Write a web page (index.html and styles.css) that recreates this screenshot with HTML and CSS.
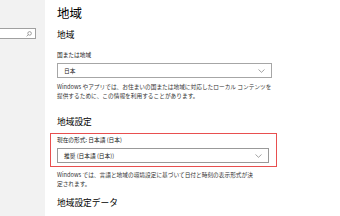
FILE: index.html
```html
<!DOCTYPE html>
<html lang="ja">
<head>
  <meta charset="UTF-8">
  <title>地域</title>
  <link rel="stylesheet" href="styles.css">
</head>
<body>

<div class="sidebar">
  <div class="search">
    <svg width="6" height="6" viewBox="0 0 6 6"><circle cx="3.6" cy="2.4" r="1.8" fill="none" stroke="#666" stroke-width="0.6"/><line x1="2.3" y1="3.7" x2="0.6" y2="5.4" stroke="#666" stroke-width="0.6"/></svg>
  </div>
</div>

<div class="main">
  <h1>地域</h1>

  <h2>地域</h2>
  <div class="label">国または地域</div>
  <div class="select">
    <span>日本</span>
    <svg class="chevron" width="7" height="4" viewBox="0 0 7 4"><polyline points="0.5,0.5 3.5,3.3 6.5,0.5" fill="none" stroke="#666" stroke-width="0.6"/></svg>
  </div>
  <p class="desc">Windows やアプリでは、お住まいの国または地域に対応したローカル コンテンツを<br>提供するために、この情報を利用することがあります。</p>

  <h2 class="section">地域設定</h2>
  <div class="highlight">
    <div class="label">現在の形式: 日本語 (日本)</div>
    <div class="select active">
      <span>推奨 (日本語 (日本))</span>
      <svg class="chevron" width="7" height="4" viewBox="0 0 7 4"><polyline points="0.5,0.5 3.5,3.3 6.5,0.5" fill="none" stroke="#666" stroke-width="0.6"/></svg>
    </div>
  </div>
  <p class="desc after">Windows では、言語と地域の環境設定に基づいて日付と時刻の表示形式が決<br>定されます。</p>

  <h2 class="last">地域設定データ</h2>
</div>

</body>
</html>
```

FILE: styles.css
```css
body { margin: 0; display: flex; height: 216px; overflow: hidden; background: #fff; color: #000; font-family: "Noto Sans CJK JP", "Noto Sans", sans-serif; }
.sidebar { width: 45px; flex-shrink: 0; background: #f2f2f2; padding-top: 28px; box-sizing: border-box; }
.search { width: 36px; height: 11px; background: #fff; border: 1px solid #a0a0a0; border-left: none; display: flex; align-items: center; justify-content: flex-end; padding-right: 3px; box-sizing: border-box; }
.main { width: 215px; flex-shrink: 0; padding: 5px 0 0 12px; }
h1 { font-size: 12.5px; font-weight: normal; line-height: 15px; margin: 0; }
h2 { font-size: 8.7px; font-weight: normal; line-height: 11px; margin: 9px 0 0; }
h2.section { margin-top: 16px; }
h2.last { margin-top: 9px; }
.label { font-size: 5.7px; line-height: 8px; margin-top: 10.5px; color: #222; white-space: nowrap; }
.select { height: 15px; box-sizing: border-box; border: 1px solid #a6a6a6; margin-top: 4.5px; font-size: 5.7px; line-height: 13px; padding: 0 6px; color: #222; display: flex; justify-content: space-between; align-items: center; }
.select.active { border: 1.5px solid #999; margin-right: 1px; }
.desc { font-size: 5.7px; line-height: 9px; margin: 3.5px 0 0; color: #333; white-space: nowrap; }
.desc.after { margin-top: 2.5px; }
.highlight { margin: 6.5px -5px 0 -7px; border: 1px solid #e84f4f; padding: 2px 6px 3px 6px; }
.highlight .label { margin-top: 0; }
.highlight .select { margin-top: 4px; }
```
